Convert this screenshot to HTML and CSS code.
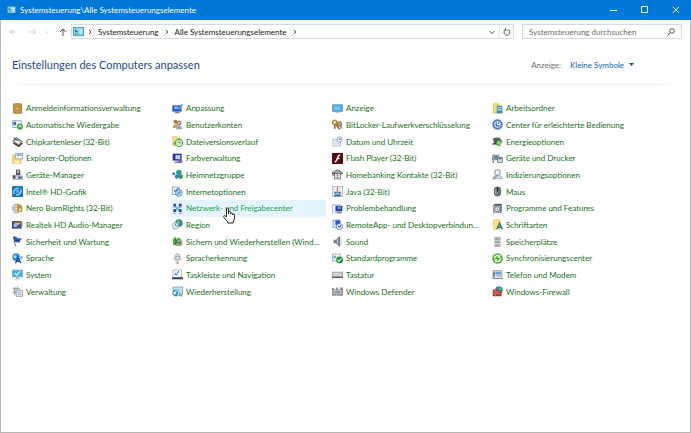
FILE: index.html
```
<!DOCTYPE html>
<html lang="de">
<head>
  <meta charset="UTF-8">
  <meta name="viewport" content="width=device-width, initial-scale=1">
  <title>Systemsteuerung\Alle Systemsteuerungselemente</title>
  <link rel="stylesheet" href="styles.css">
</head>
<body>

  <!-- Shared symbols -->
  <svg class="sprite" aria-hidden="true">
    <symbol id="panel" viewBox="0 0 16 14">
      <rect x=".5" y=".5" width="15" height="12" fill="#8fd6f5" stroke="#2c7fb0"/>
      <circle cx="5" cy="5" r="2.5" fill="#1d78b8"/><path d="M5 5V2.500A2.500 2.500 0 0 1 7.500 5z" fill="#fff"/>
      <path d="M9.500 4h4M9.500 7h4" stroke="#fff" stroke-width="1.500"/>
      <path d="M3 10h5" stroke="#2a9a50" stroke-width="1.500"/>
    </symbol>
    <symbol id="chevron" viewBox="0 0 6 6"><path d="M2 1l2 2-2 2" fill="none" stroke="#444"/></symbol>
  </svg>

  <div class="window">
    <header class="titlebar">
      <svg class="title-icon"><use href="#panel"/></svg>
      <h1>Systemsteuerung\Alle Systemsteuerungselemente</h1>
      <div class="window-buttons">
        <button type="button" aria-label="Minimieren"><svg viewBox="0 0 8 8"><path d="M0 4.500h7"/></svg></button>
        <button type="button" aria-label="Maximieren"><svg viewBox="0 0 8 8"><path d="M.5.5h6v6h-6z"/></svg></button>
        <button type="button" aria-label="Schließen"><svg viewBox="0 0 8 8"><path d="M.8.8l6 6M6.800.8l-6 6"/></svg></button>
      </div>
    </header>

    <div class="toolbar">
      <div class="nav-buttons">
        <button type="button" aria-label="Zurück" disabled><svg viewBox="0 0 8 8"><path d="M8 4H1M4 1L1 4l3 3"/></svg></button>
        <button type="button" aria-label="Vorwärts" disabled><svg viewBox="0 0 8 8"><path d="M0 4h7M4 1l3 3-3 3"/></svg></button>
        <button type="button" class="small" aria-label="Verlauf" disabled><svg viewBox="0 0 8 8"><path d="M2 3l2 2 2-2"/></svg></button>
        <button type="button" aria-label="Nach oben"><svg viewBox="0 0 8 8"><path d="M4 8V1M1 4l3-3 3 3"/></svg></button>
      </div>
      <nav class="address">
        <svg class="address-icon"><use href="#panel"/></svg>
        <svg class="chevron"><use href="#chevron"/></svg>
        <a href="#">Systemsteuerung</a>
        <svg class="chevron"><use href="#chevron"/></svg>
        <a href="#">Alle Systemsteuerungselemente</a>
        <svg class="chevron"><use href="#chevron"/></svg>
        <button type="button" class="history" aria-label="Vorherige Orte"><svg viewBox="0 0 8 8"><path d="M1.500 3L4 5.500 6.500 3"/></svg></button>
        <button type="button" class="refresh" aria-label="Aktualisieren"><svg viewBox="0 0 8 8"><path d="M5.500 1.600A3 3 0 1 1 2.300 1.700M2.300 0v2.200h2.400"/></svg></button>
      </nav>
      <form class="search">
        <input type="text" aria-label="Suchen" placeholder="Systemsteuerung durchsuchen">
        <button type="submit" aria-label="Suche starten"><svg viewBox="0 0 8 8"><circle cx="5" cy="3" r="2.300"/><path d="M3.300 4.700L.7 7.300"/></svg></button>
      </form>
    </div>

    <main>
      <div class="heading">
        <h2>Einstellungen des Computers anpassen</h2>
        <div class="view">
          <label for="view">Anzeige:</label>
          <select id="view">
            <option>Kleine Symbole</option>
          </select>
          <svg class="view-arrow" viewBox="0 0 5 3"><path d="M0 0h5L2.500 3z"/></svg>
        </div>
      </div>

      <div class="items">
        <ul>
          <li><a href="#"><svg viewBox="0 0 16 16"><rect x="2" y="1" width="12" height="14" rx="1" fill="#c69a45" stroke="#8a6829"/><circle cx="8" cy="8" r="3" fill="#e3c47c" stroke="#9a742e"/><path d="M8 8l2-2" stroke="#76551e"/></svg><span>Anmeldeinformationsverwaltung</span></a></li>
          <li><a href="#"><svg viewBox="0 0 16 16"><rect x=".5" y="2.500" width="13" height="10" fill="#f4f8fb" stroke="#7d95a8"/><rect x="2" y="4" width="4" height="5" fill="#346fae"/><circle cx="11.500" cy="11" r="4.500" fill="#3fa34a"/><path d="M9 12l3-3 2 3" fill="none" stroke="#d5f3ce" stroke-width="1.500"/></svg><span>Automatische Wiedergabe</span></a></li>
          <li><a href="#"><svg viewBox="0 0 16 16"><path d="M1 7l5-5 9 6-5 6z" fill="#c8c8c8" stroke="#3a3a3a"/><path d="M2 10l8 5 5-5" fill="none" stroke="#333" stroke-width="2"/><path d="M3 3l6 4" stroke="#555" stroke-width="2"/><path d="M6 7l4 3" stroke="#fff" stroke-width="2"/></svg><span>Chipkartenleser (32-Bit)</span></a></li>
          <li><a href="#"><svg viewBox="0 0 16 16"><path d="M1 3h4l1 2h7v10H1z" fill="#f6d66d" stroke="#d5b046"/><rect x="5.500" y=".5" width="10" height="8" fill="#fff" stroke="#7793ad"/><path d="M7 3h7" stroke="#5a8fc5" stroke-width="2"/><path d="M3 11h8v4H3z" fill="#fff2b4"/></svg><span>Explorer-Optionen</span></a></li>
          <li><a href="#"><svg viewBox="0 0 16 16"><rect x="6" y="1" width="6" height="8" fill="#4c4c58"/><rect x="7.500" y="2" width="3" height="4" fill="#b4c0cc"/><path d="M2 10h13v5H2z" fill="#d7d9dc" stroke="#8b8f94"/><rect x="1" y="9" width="4" height="5" fill="#56586a"/><rect x="9" y="11" width="5" height="3" fill="#5b5b66"/></svg><span>Geräte-Manager</span></a></li>
          <li><a href="#"><svg viewBox="0 0 16 16"><rect width="16" height="16" rx="1" fill="#1876c4"/><path d="M3 12c-2-5 2-9 7-9M6 13c5 0 8-4 7-8" fill="none" stroke="#9bd7fb" stroke-width="2"/><path d="M6 6h4v4H6z" fill="#5fb4ec"/></svg><span>Intel® HD-Grafik</span></a></li>
          <li><a href="#"><svg viewBox="0 0 16 16"><circle cx="7" cy="8" r="6.500" fill="#d9d9d2" stroke="#8c8c80"/><circle cx="6" cy="8" r="2" fill="#fff" stroke="#77776d"/><path d="M7 3c4-3 9 0 8 5v5H8z" fill="#b79a3d"/><path d="M10 8h3v4h-3z" fill="#f0dfa0"/></svg><span>Nero BurnRights (32-Bit)</span></a></li>
          <li><a href="#"><svg viewBox="0 0 16 16"><rect y="3" width="14" height="11" fill="#34487c"/><path d="M1 5h13l-5 4z" fill="#e9b52b"/><circle cx="5" cy="9" r="3" fill="#a2b4dc"/><path d="M9 12l6-7v5z" fill="#656b82"/></svg><span>Realtek HD Audio-Manager</span></a></li>
          <li><a href="#"><svg viewBox="0 0 16 16"><path d="M2 1l3 14" stroke="#6e7a9a" stroke-width="1.500"/><path d="M2 1c4-1 5 3 13 3-2 1-3 2-4 5-3 1-5-1-7 0z" fill="#2b46b4"/><path d="M4 3c3 0 4 2 7 2" fill="none" stroke="#7e96ea"/></svg><span>Sicherheit und Wartung</span></a></li>
          <li><a href="#"><svg viewBox="0 0 16 16"><circle cx="6" cy="6" r="5.500" fill="#2f86c9"/><path d="M3 3l4 1-2 4-3-1z" fill="#a5dcef"/><path d="M8 5h8l-2 4H9z" fill="#5095cf"/><path d="M5 15l4-8 4 8M6 12h6" fill="none" stroke="#174f8f" stroke-width="2"/><path d="M10 7h4" stroke="#fff"/></svg><span>Sprache</span></a></li>
          <li><a href="#"><svg viewBox="0 0 16 16"><rect x=".5" y="1.500" width="15" height="10" fill="#42b1e8" stroke="#93a9b8"/><path d="M4 6l3 3 5-6" fill="none" stroke="#e1f6ff" stroke-width="1.500"/><path d="M6 12h4v2h3v1H3v-1h3z" fill="#a5b2bc"/></svg><span>System</span></a></li>
          <li><a href="#"><svg viewBox="0 0 16 16"><path d="M6 6h9v9H6z" fill="#f1f3f5" stroke="#7b838b"/><path d="M1 4h10M4 1v12M8 1v4M1 9h5" stroke="#8a9198" stroke-width="1.500"/><path d="M8 9h5M8 12h5" stroke="#727b84"/></svg><span>Verwaltung</span></a></li>
        </ul>

        <ul>
          <li><a href="#"><svg viewBox="0 0 16 16"><rect x=".5" y="3.500" width="13" height="9" fill="#2756c8" stroke="#7d91b8"/><rect x="3" y="5" width="6" height="4" fill="#79b2f4"/><path d="M8 9l6-8 2 1-5 8z" fill="#4ba3d5"/><path d="M4 14h7" stroke="#7888a5" stroke-width="2"/></svg><span>Anpassung</span></a></li>
          <li><a href="#"><svg viewBox="0 0 16 16"><circle cx="5" cy="4" r="3" fill="#a7834c"/><path d="M1 13c0-7 8-7 8 0z" fill="#c8a65e"/><circle cx="10" cy="6" r="3" fill="#d7b19a" stroke="#775144"/><path d="M6 15c0-7 9-7 9 0z" fill="#8fa7bd"/></svg><span>Benutzerkonten</span></a></li>
          <li><a href="#"><svg viewBox="0 0 16 16"><path d="M1 1h6l1 2h5v11H1z" fill="#f5df8a" stroke="#dbc066"/><circle cx="10" cy="10" r="5.300" fill="#d5edcb" stroke="#48a05a" stroke-width="1.500"/><path d="M10 7v3h3" fill="none" stroke="#34714a"/><path d="M2 9h5l-3 4z" fill="#49ab5b"/></svg><span>Dateiversionsverlauf</span></a></li>
          <li><a href="#"><svg viewBox="0 0 16 16"><rect x="1" y="1" width="13" height="10" fill="#322d91"/><rect x="5" y="3" width="7" height="6" fill="#bcd1f4"/><path d="M5 12h5v3H3z" fill="#8c8ba6"/><circle cx="12" cy="12" r="3" fill="#7e63b8"/></svg><span>Farbverwaltung</span></a></li>
          <li><a href="#"><svg viewBox="0 0 16 16"><circle cx="2.500" cy="7" r="2" fill="#2d6db8"/><circle cx="10" cy="5" r="4" fill="#2e9c91"/><circle cx="7" cy="11" r="3" fill="#3478bd"/><circle cx="12.500" cy="11" r="3.500" fill="#2d9b55"/></svg><span>Heimnetzgruppe</span></a></li>
          <li><a href="#"><svg viewBox="0 0 16 16"><rect x=".5" y="1.500" width="10" height="11" fill="#eaf3fb" stroke="#6f8dab"/><circle cx="10" cy="10" r="5" fill="#a8d1ec" stroke="#4f86b3"/><path d="M3 6l2 2 4-5M8 12l4-4" fill="none" stroke="#39668f" stroke-width="1.500"/></svg><span>Internetoptionen</span></a></li>
          <li><a href="#" class="active"><svg viewBox="0 0 16 16"><path d="M5 5l6 6M11 5l-6 6" stroke="#78aab0" stroke-width="2"/><path d="M2 1h4v4H2zM10 1h4v4h-4zM2 9h4v4H2zM10 9h4v4h-4z" fill="#29459b"/><path d="M1 6h5M10 6h5M1 15h5M10 15h5" stroke="#7a8db8"/><path d="M6 6h4v4H6z" fill="#6fb8c4"/></svg><span>Netzwerk- und Freigabecenter</span></a>
            <svg class="cursor" viewBox="0 0 12 17"><path d="M3.500 10V2a1 1 0 0 1 2 0v5V5.500a1 1 0 0 1 2 0V7a1 1 0 0 1 2 0v1a1 1 0 0 1 2 0v3c0 2-1 3-1.500 5h-5C4.500 14 2.500 12.500 1 10.500c-1-1.500.5-2.500 1.500-1.500z" fill="#fff" stroke="#222"/></svg>
          </li>
          <li><a href="#"><svg viewBox="0 0 16 16"><circle cx="10" cy="6" r="5.500" fill="#348b9f"/><path d="M8 2l4 2-3 5-3-2z" fill="#85c86d"/><circle cx="5" cy="10" r="4.500" fill="#e2eef4" stroke="#7893a8"/><path d="M5 7v3h3" fill="none" stroke="#3c5d7d"/></svg><span>Region</span></a></li>
          <li><a href="#" title="Sichern und Wiederherstellen (Windows 7)"><svg viewBox="0 0 16 16"><path d="M1 5l4-4 2 3 4-2 4 6-5 7-8-2z" fill="#5aaf42"/><circle cx="11" cy="10" r="4.500" fill="#a6a69c"/><path d="M4 4l3 5-4 3" fill="none" stroke="#2b7b2f" stroke-width="2"/><circle cx="11" cy="10" r="2" fill="#468d41"/></svg><span>Sichern und Wiederherstellen (Wind...</span></a></li>
          <li><a href="#"><svg viewBox="0 0 16 16"><rect x="5" y="1" width="6" height="9" rx="3" fill="#dde0e3" stroke="#8d9399"/><path d="M3 6c0 8 10 8 10 0M8 12v3M5 15h6M5 5h6" fill="none" stroke="#858b91"/></svg><span>Spracherkennung</span></a></li>
          <li><a href="#"><svg viewBox="0 0 16 16"><rect x="1.500" y="1.500" width="12" height="11" fill="#f6fafd" stroke="#8aa3b8"/><path d="M4 6l2 3 4-6" fill="none" stroke="#3a75ae" stroke-width="1.500"/><path d="M0 12h16v3H0z" fill="#36475b"/></svg><span>Taskleiste und Navigation</span></a></li>
          <li><a href="#"><svg viewBox="0 0 16 16"><rect x="1.500" y="1.500" width="14" height="10" fill="#c5e2f3" stroke="#6f93ad"/><circle cx="6" cy="10" r="5" fill="#3488bf"/><path d="M4 10a3 3 0 1 1 3 3M2 9l2 3 2-3" fill="none" stroke="#d5f1e3" stroke-width="1.500"/><path d="M10 12h5v3h-5z" fill="#79a386"/></svg><span>Wiederherstellung</span></a></li>
        </ul>

        <ul>
          <li><a href="#"><svg viewBox="0 0 16 16"><rect x=".5" y="2.500" width="15" height="10" fill="#4ba8e3" stroke="#7299b5"/><path d="M3 5h9v5H3z" fill="#7ac4f3"/><path d="M5 14h6" stroke="#8ba0ae"/></svg><span>Anzeige</span></a></li>
          <li><a href="#"><svg viewBox="0 0 16 16"><circle cx="4" cy="5" r="3" fill="none" stroke="#c28f34" stroke-width="2.500"/><path d="M5 7l6 8M4 8v6" stroke="#9d722a" stroke-width="2.500"/><circle cx="11" cy="7" r="3" fill="#b9a987" stroke="#83745a" stroke-width="1.500"/><path d="M12 9l2 5" stroke="#8c8272" stroke-width="2"/></svg><span>BitLocker-Laufwerkverschlüsselung</span></a></li>
          <li><a href="#"><svg viewBox="0 0 16 16"><rect x="1.500" y="4.500" width="11" height="10" fill="#eef4f9" stroke="#91a8bc"/><path d="M4 8h6M4 11h6" stroke="#b7c7d5"/><circle cx="11" cy="5" r="4" fill="#dae8f2" stroke="#7995ad"/><path d="M11 3v2h2" fill="none" stroke="#526d85"/></svg><span>Datum und Uhrzeit</span></a></li>
          <li><a href="#"><svg viewBox="0 0 16 16"><rect width="16" height="16" fill="#580b12"/><path d="M12 3C8 3 8 8 7 10s-2 3-3 3M7 8h4" fill="none" stroke="#fff" stroke-width="2"/></svg><span>Flash Player (32-Bit)</span></a></li>
          <li><a href="#"><svg viewBox="0 0 16 16"><path d="M1 5l7-4 7 4v2H1z" fill="#a5a5a5" stroke="#444"/><rect x="3.500" y="6.500" width="9" height="8" fill="#fff" stroke="#555"/><path d="M5 9h6M5 12h6M8 7v7" stroke="#777"/><path d="M1 9h3M1 5v4" stroke="#333"/></svg><span>Homebanking Kontakte (32-Bit)</span></a></li>
          <li><a href="#"><svg viewBox="0 0 16 16"><rect x=".5" y=".5" width="15" height="15" fill="#e8edf3" stroke="#9ba9b8"/><path d="M9 2c-4 3 1 3-2 6" fill="none" stroke="#d3622c" stroke-width="1.500"/><path d="M4 9h7v3H5zM3 14h10M11 10h2" fill="none" stroke="#456e9d" stroke-width="1.500"/></svg><span>Java (32-Bit)</span></a></li>
          <li><a href="#"><svg viewBox="0 0 16 16"><rect x=".5" y="2.500" width="11" height="11" fill="#eef4fa" stroke="#9dadbb"/><rect x="5" y="4" width="10" height="8" fill="#293f91"/><path d="M8 5h5v4H8z" fill="#6b91d8"/><path d="M7 14h7" stroke="#71809a" stroke-width="2"/></svg><span>Problembehandlung</span></a></li>
          <li><a href="#" title="RemoteApp- und Desktopverbindungen"><svg viewBox="0 0 16 16"><rect x="1.500" y="1.500" width="10" height="11" fill="#d9e7f8" stroke="#718dbc"/><path d="M5 2h7v7H5z" fill="#2d56b2"/><circle cx="11" cy="11" r="4.500" fill="#e4ecf8" stroke="#4267ab"/><path d="M9 10l2 2 2-3" fill="none" stroke="#315ba6" stroke-width="1.500"/></svg><span>RemoteApp- und Desktopverbindun...</span></a></li>
          <li><a href="#"><svg viewBox="0 0 16 16"><path d="M3 6h3l5-5v14l-5-5H3z" fill="#84898e" stroke="#575b60"/><path d="M8 5v6M13 2v12" stroke="#c6cacd" stroke-width="1.500"/></svg><span>Sound</span></a></li>
          <li><a href="#"><svg viewBox="0 0 16 16"><rect x=".5" y="1.500" width="12" height="10" fill="#f7f9fa" stroke="#8e9da8"/><path d="M2 4h4v4H2z" fill="#7fa4c5"/><circle cx="11" cy="10" r="5" fill="#249243"/><path d="M8 10l2 2 4-4" fill="none" stroke="#fff" stroke-width="1.500"/></svg><span>Standardprogramme</span></a></li>
          <li><a href="#"><svg viewBox="0 0 16 16"><rect x=".5" y="4.500" width="15" height="8" fill="#c6c9cc" stroke="#8e9397"/><path d="M2 7h12M2 9h12" stroke="#e5e7e8"/><path d="M0 12h16" stroke="#555a5f" stroke-width="2"/></svg><span>Tastatur</span></a></li>
          <li><a href="#"><svg viewBox="0 0 16 16"><path d="M0 3h3v2h3V2h3v3h3V2h4v12H0z" fill="#8c8f91"/><path d="M0 7h16M0 11h16M4 7v4M9 3v4M12 7v4M7 11v3" stroke="#d3d5d6"/></svg><span>Windows Defender</span></a></li>
        </ul>

        <ul>
          <li><a href="#"><svg viewBox="0 0 16 16"><path d="M2 1h8v14H2z" fill="#f6da75" stroke="#e0bd4d"/><rect x="7" y="4" width="8" height="11" fill="#3887bd"/><path d="M8 7h6M8 10h6" stroke="#d3edf8" stroke-width="1.500"/></svg><span>Arbeitsordner</span></a></li>
          <li><a href="#"><svg viewBox="0 0 16 16"><circle cx="8" cy="8" r="7.300" fill="#4777bf" stroke="#8299c0"/><circle cx="8" cy="8" r="4" fill="none" stroke="#d9e8fa" stroke-width="1.500"/><path d="M8 3v5h4" fill="none" stroke="#fff" stroke-width="1.500"/></svg><span>Center für erleichterte Bedienung</span></a></li>
          <li><a href="#"><svg viewBox="0 0 16 16"><path d="M2 3l9-1 4 6-4 7-8-3z" fill="#3c8e42"/><path d="M1 5l7-3 3 4-7 3z" fill="#63585a"/><circle cx="10" cy="10" r="3" fill="#8fd17e"/><path d="M1 12l5-2" stroke="#444" stroke-width="2"/></svg><span>Energieoptionen</span></a></li>
          <li><a href="#"><svg viewBox="0 0 16 16"><rect x="1" y="3" width="9" height="7" fill="#a7b2b9" stroke="#65717a"/><path d="M3 5h5v3H3z" fill="#437f9c"/><rect x="8" y="6" width="7" height="8" fill="#d5dadd" stroke="#5b6871"/><path d="M9 8h5M2 11v3" stroke="#437683" stroke-width="2"/></svg><span>Geräte und Drucker</span></a></li>
          <li><a href="#"><svg viewBox="0 0 16 16"><circle cx="8" cy="5" r="4" fill="#f1f3f5" stroke="#8f9ba6" stroke-width="1.500"/><path d="M1 14c0-6 14-6 14 0z" fill="#d5dde4" stroke="#8d9ba8"/><path d="M2 15l6-6" stroke="#7f90a0" stroke-width="1.500"/></svg><span>Indizierungsoptionen</span></a></li>
          <li><a href="#"><svg viewBox="0 0 16 16"><rect x="3.500" y="1.500" width="9" height="13" rx="4" fill="#777c80" stroke="#3e4245"/><path d="M8 2v6" stroke="#222" stroke-width="2"/><path d="M5.500 4v7" stroke="#ccd0d2"/></svg><span>Maus</span></a></li>
          <li><a href="#"><svg viewBox="0 0 16 16"><path d="M2 3l3-2h9v13H2z" fill="#555b61"/><rect x="3" y="4" width="9" height="10" fill="#b9c0c5"/><circle cx="7.500" cy="9" r="3.500" fill="#f3f5f6" stroke="#4b5055"/><circle cx="7.500" cy="9" r="1" fill="#4b5055"/></svg><span>Programme und Features</span></a></li>
          <li><a href="#"><svg viewBox="0 0 16 16"><path d="M2 1h10v14H2z" fill="#f7df86" stroke="#ebcd68"/><path d="M7 15l4-9 4 9M8 12h6" fill="none" stroke="#347079" stroke-width="2"/></svg><span>Schriftarten</span></a></li>
          <li><a href="#"><svg viewBox="0 0 16 16"><path d="M4 2h8v3H4zM4 7h8v3H4zM4 12h8v3H4z" fill="#d2d6d9" stroke="#8b9298"/><path d="M5 4h5M5 9h5M5 14h5" stroke="#737a80"/></svg><span>Speicherplätze</span></a></li>
          <li><a href="#"><svg viewBox="0 0 16 16"><circle cx="8" cy="8" r="7.500" fill="#4eae2d"/><path d="M4 8a4 4 0 0 1 7-3M12 8a4 4 0 0 1-7 3" fill="none" stroke="#fff" stroke-width="2"/><path d="M12 2v5H8zM4 14V9h4z" fill="#fff"/></svg><span>Synchronisierungscenter</span></a></li>
          <li><a href="#"><svg viewBox="0 0 16 16"><rect x="1.500" y="2.500" width="13" height="11" fill="#e3e9ed" stroke="#75848f"/><rect x="5" y="4" width="8" height="4" fill="#6b9fc5"/><path d="M3 4v8" stroke="#596874" stroke-width="2"/><path d="M6 10h7M0 14h16" stroke="#77848e"/></svg><span>Telefon und Modem</span></a></li>
          <li><a href="#"><svg viewBox="0 0 16 16"><circle cx="10" cy="6" r="5.500" fill="#2b8ba9"/><path d="M9 1l5 3-4 3z" fill="#68b467"/><path d="M1 5h9v3h4v7H1z" fill="#a83a32"/><path d="M1 8h9M1 11h13M5 5v3M8 8v3M5 11v4" stroke="#dc8c7f"/></svg><span>Windows-Firewall</span></a></li>
        </ul>
      </div>
    </main>
  </div>

</body>
</html>
```
FILE: styles.css
```
* {
  box-sizing: border-box;
}

body {
  margin: 0;
  font-family: Lato, 'Open Sans', sans-serif;
  font-size: 8px;
  line-height: 12px;
  color: #222;
  background-color: #fff;
}

h1,
h2,
ul {
  margin: 0;
  padding: 0;
  font-size: inherit;
  font-weight: 400;
}

ul {
  list-style: none;
}

a {
  color: inherit;
  text-decoration: none;
}

button {
  display: flex;
  align-items: center;
  justify-content: center;
  padding: 0;
  border: none;
  background: none;
  color: inherit;
}

button svg {
  width: 8px;
  height: 8px;
  fill: none;
  stroke: currentColor;
}

.sprite {
  display: none;
}

.window {
  display: flex;
  flex-direction: column;
  min-height: 100vh;
  border: 1px solid #b8b8b8;
  border-top: none;
}

/* Title bar */
.titlebar {
  display: flex;
  align-items: center;
  height: 20px;
  margin: 0 -1px;
  padding-left: 7px;
  background-color: #0078d7;
  color: #fff;
}

.title-icon {
  width: 9px;
  height: 8px;
  margin-right: 4px;
}

.window-buttons {
  display: flex;
  margin-left: auto;
}

.window-buttons button {
  width: 31px;
  height: 20px;
}

/* Address bar */
.toolbar {
  display: flex;
  align-items: center;
  padding: 4px 8px 0;
}

.nav-buttons {
  display: flex;
  width: 62px;
  color: #555;
}

.nav-buttons button {
  width: 8px;
  margin-right: 12px;
}

.nav-buttons button:disabled {
  color: #ccc;
}

.nav-buttons .small {
  width: 6px;
  margin: 0 6px 0 -5px;
}

.nav-buttons button:last-child {
  margin: 0 0 0 3px;
}

.address,
.search {
  display: flex;
  align-items: center;
  height: 15px;
  border: 1px solid #d9d9d9;
}

.address {
  flex: 1;
  padding-left: 1px;
}

.address-icon {
  width: 11px;
  height: 10px;
}

.chevron {
  width: 6px;
  height: 6px;
  margin: 0 5px 0 3px;
}

.address a + .chevron {
  margin-left: 5px;
}

.history,
.refresh {
  width: 14px;
  height: 13px;
  color: #555;
}

.history {
  margin-left: auto;
}

.refresh {
  border-left: 1px solid #e5e5e5;
}

.search {
  flex: 0 0 160px;
  margin-left: 8px;
}

.search input {
  flex: 1;
  min-width: 0;
  height: 12px;
  padding: 0 0 0 6px;
  border: none;
  outline: none;
  background: none;
  font: inherit;
}

.search input::placeholder {
  color: #6d6d6d;
}

.search button {
  width: 20px;
  color: #555;
}

/* Heading */
.heading {
  display: flex;
  align-items: center;
  height: 46px;
  margin: 0 7px;
  padding: 6px 49px 0 4px;
  border-bottom: 1px solid;
  border-image: linear-gradient(to right, #fff, #e6eef2 5%, #e6eef2 95%, #fff) 1;
}

.heading h2 {
  font-size: 11px;
  line-height: 16px;
  color: #1f4a94;
}

.view {
  display: flex;
  align-items: center;
  margin-left: auto;
  color: #707070;
}

.view select {
  appearance: none;
  margin: 0 4px 0 9px;
  padding: 0;
  border: none;
  background: none;
  font: inherit;
  color: #0f62ba;
}

.view-arrow {
  width: 5px;
  height: 3px;
  fill: #0f4f9c;
}

/* Control panel items */
.items {
  display: grid;
  grid-template-columns: repeat(4, 1fr);
  column-gap: 5px;
  height: 200px;
  margin: 15px 44px 0 10px;
}

.items ul {
  display: grid;
  grid-template-rows: repeat(12, 1fr);
  min-width: 0;
}

.items li {
  position: relative;
  min-width: 0;
}

.items a {
  display: flex;
  align-items: center;
  gap: 3px;
  height: 100%;
  padding-left: 1px;
  color: #1b701b;
}

.items a svg {
  flex: none;
  width: 11px;
  height: 11px;
}

.items span {
  white-space: nowrap;
}

.items a:hover,
.items .active {
  background-color: #e5f3ff;
  color: #1fa04a;
}

.cursor {
  position: absolute;
  top: 7px;
  left: 52px;
  width: 12px;
  height: 17px;
}
```
